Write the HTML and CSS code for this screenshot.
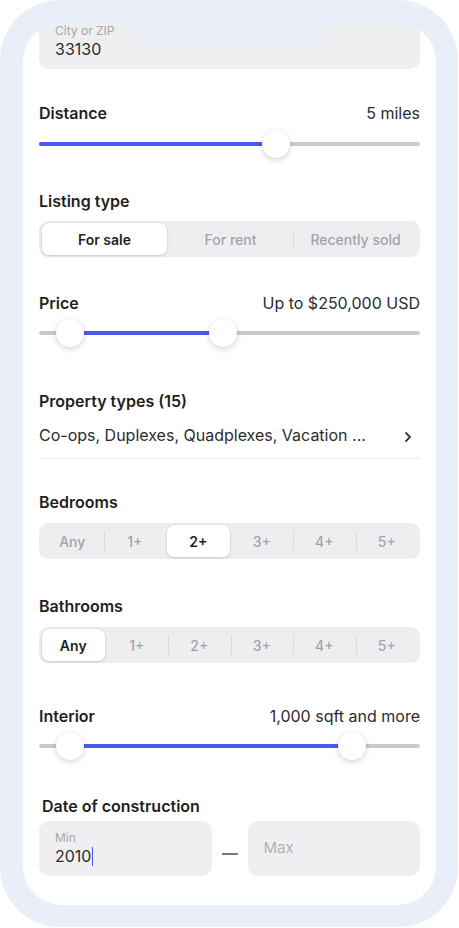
FILE: index.html
```html
<!DOCTYPE html>
<html lang="en">
  <head>
    <meta charset="UTF-8" />
    <meta name="viewport" content="width=device-width, initial-scale=1.0" />
    <title>Search filters</title>
    <link rel="stylesheet" href="styles.css">
  </head>
  <body>
    <div class="phone">
      <div class="screen">
        <div class="notch"></div>

        <div class="filters">
          <div class="field city">
            <span class="field-label">City or ZIP</span>
            <span class="field-value">33130</span>
          </div>

          <div class="row distance">
            <span class="label">Distance</span>
            <span class="value">5 miles</span>
          </div>
          <div class="slider slider-distance">
            <div class="track"></div>
            <div class="fill" style="left: 0%; width: 62.2%"></div>
            <div class="thumb" style="left: 62.2%"></div>
          </div>

          <div class="label listing-label">Listing type</div>
          <div class="segmented listing">
            <span class="seg selected">For sale</span>
            <span class="seg">For rent</span>
            <span class="seg divided">Recently sold</span>
          </div>

          <div class="row price">
            <span class="label">Price</span>
            <span class="value">Up to $250,000 USD</span>
          </div>
          <div class="slider slider-price">
            <div class="track"></div>
            <div class="fill" style="left: 8.1%; width: 40.2%"></div>
            <div class="thumb" style="left: 8.1%"></div>
            <div class="thumb" style="left: 48.3%"></div>
          </div>

          <div class="label property-label">Property types (15)</div>
          <div class="property-row">
            <span class="property-text">Co-ops, Duplexes, Quadplexes, Vacation ...</span>
            <svg class="chevron" width="8" height="12" viewBox="0 0 8 12">
              <polyline points="2,2 6,6 2,10" fill="none" stroke="#3a3a3e" stroke-width="1.8" stroke-linecap="round" stroke-linejoin="round" />
            </svg>
          </div>

          <div class="label bedrooms-label">Bedrooms</div>
          <div class="segmented rooms">
            <span class="seg">Any</span>
            <span class="seg divided">1+</span>
            <span class="seg selected">2+</span>
            <span class="seg">3+</span>
            <span class="seg divided">4+</span>
            <span class="seg divided">5+</span>
          </div>

          <div class="label bathrooms-label">Bathrooms</div>
          <div class="segmented rooms">
            <span class="seg selected">Any</span>
            <span class="seg">1+</span>
            <span class="seg divided">2+</span>
            <span class="seg divided">3+</span>
            <span class="seg divided">4+</span>
            <span class="seg divided">5+</span>
          </div>

          <div class="row interior">
            <span class="label">Interior</span>
            <span class="value">1,000 sqft and more</span>
          </div>
          <div class="slider slider-interior">
            <div class="track"></div>
            <div class="fill" style="left: 8.1%; width: 74.1%"></div>
            <div class="thumb" style="left: 8.1%"></div>
            <div class="thumb" style="left: 82.2%"></div>
          </div>

          <div class="label date-label">Date of construction</div>
          <div class="range">
            <div class="field range-box">
              <span class="field-label">Min</span>
              <span class="field-value">2010<span class="caret"></span></span>
            </div>
            <span class="dash"></span>
            <div class="field range-box empty">
              <span class="placeholder">Max</span>
            </div>
          </div>
        </div>
      </div>
    </div>
  </body>
</html>
```

FILE: styles.css
```css
body {
  margin: 0;
  background: #ffffff;
  font-family: Inter, "Noto Sans", sans-serif;
  color: #1f1f22;
}

.phone {
  width: 458px;
  height: 927px;
  box-sizing: border-box;
  padding: 23px 22px 22px 23px;
  background: #eaeef9;
  border-radius: 60px;
}

.screen {
  position: relative;
  height: 100%;
  background: #ffffff;
  border-radius: 38px;
  overflow: hidden;
}

.notch {
  position: absolute;
  top: 0;
  left: 113px;
  width: 187px;
  height: 22px;
  background: #eaeef9;
  border-radius: 0 0 14px 14px;
  z-index: 2;
}

.filters {
  padding: 0 16px;
}

/* text inputs */
.field {
  display: flex;
  flex-direction: column;
  background: #efeff1;
  border-radius: 10px;
  padding: 9px 16px 10px;
}

.field-label {
  font-size: 12px;
  line-height: 16px;
  color: #a6a6ae;
}

.field-value {
  font-size: 16px;
  line-height: 20px;
  color: #2c2c30;
}

.city {
  margin-top: -10px;
  padding-top: 10px;
}

/* labels */
.label {
  font-size: 16px;
  line-height: 20px;
  font-weight: 600;
  color: #1f1f22;
}

.row {
  display: flex;
  justify-content: space-between;
}

.value {
  font-size: 16px;
  line-height: 20px;
  color: #2c2c30;
}

.distance { margin-top: 34px; }
.listing-label { margin-top: 33px; }
.price { margin-top: 36px; }
.property-label { margin-top: 44px; }
.bedrooms-label { margin-top: 33px; }
.bathrooms-label { margin-top: 37px; }
.interior { margin-top: 43px; }
.date-label {
  margin-top: 36px;
  padding-left: 3px;
}

/* sliders */
.slider {
  position: relative;
  height: 28px;
  margin-top: 6px;
}

.slider-distance { margin-top: 7px; }

.track,
.fill {
  position: absolute;
  top: 12px;
  height: 4px;
  border-radius: 2px;
}

.track {
  left: 0;
  right: 0;
  background: #c9c9ce;
}

.fill {
  background: #4a5af0;
}

.thumb {
  position: absolute;
  top: 0;
  width: 28px;
  height: 28px;
  margin-left: -14px;
  border-radius: 50%;
  background: #ffffff;
  box-shadow: 0 2px 6px rgba(0, 0, 0, 0.16), 0 0 0 0.5px rgba(0, 0, 0, 0.05);
}

/* segmented controls */
.segmented {
  display: flex;
  height: 36px;
  box-sizing: border-box;
  padding: 2px;
  margin-top: 10px;
  background: #eeeef1;
  border-radius: 9px;
}

.rooms {
  margin-top: 11px;
}

.seg {
  position: relative;
  flex: 1;
  display: flex;
  align-items: center;
  justify-content: center;
  font-size: 14px;
  font-weight: 500;
  color: #a3a3ab;
}

.seg.divided::before {
  content: "";
  position: absolute;
  left: 0;
  top: 6px;
  bottom: 6px;
  width: 1px;
  background: #d9d9de;
}

.seg.selected {
  margin: 0 1px;
  background: #ffffff;
  border-radius: 7px;
  color: #1f1f22;
  font-weight: 600;
  box-shadow: 0 1px 3px rgba(0, 0, 0, 0.14), 0 0 0 0.5px rgba(0, 0, 0, 0.05);
}

/* property types */
.property-row {
  display: flex;
  align-items: center;
  justify-content: space-between;
  padding: 14px 8px 13px 0;
  border-bottom: 1px solid #efeff2;
}

.property-text {
  font-size: 16px;
  line-height: 20px;
  color: #2c2c30;
}

.chevron {
  margin-top: 3px;
}

/* date range */
.range {
  display: flex;
  align-items: center;
  gap: 10px;
  margin-top: 5px;
}

.range-box {
  flex: 1;
  height: 55px;
  box-sizing: border-box;
}

.range-box.empty {
  justify-content: center;
  padding-top: 0;
  padding-bottom: 2px;
}

.placeholder {
  font-size: 15px;
  color: #b0b0b8;
}

.dash {
  width: 16px;
  height: 2px;
  margin-top: 11px;
  background: #76767b;
}

.caret {
  display: inline-block;
  width: 1px;
  height: 19px;
  margin-left: 1px;
  vertical-align: -4px;
  background: #4a5af0;
}
```
